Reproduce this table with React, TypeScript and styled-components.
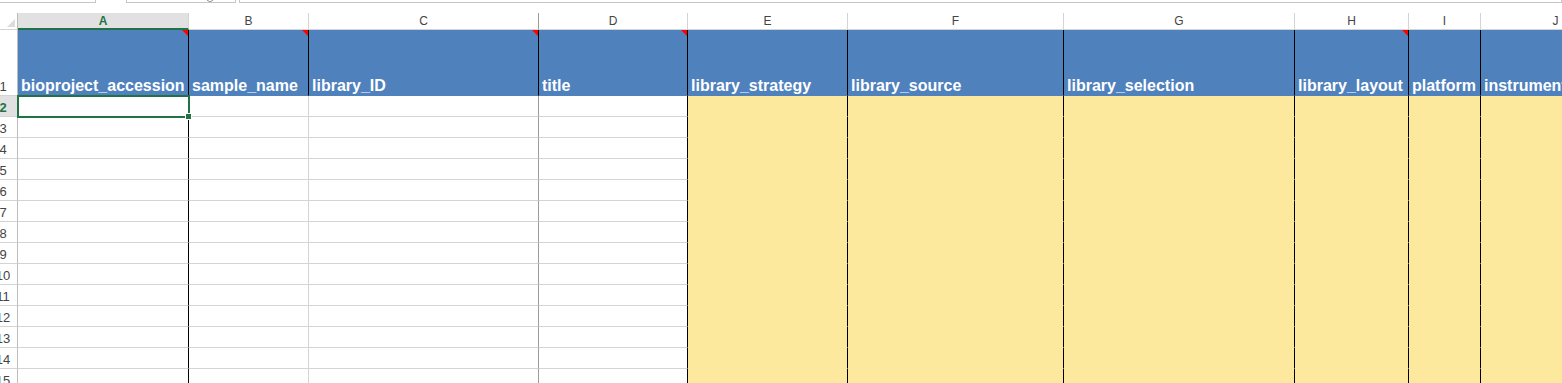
import styled, { createGlobalStyle } from 'styled-components';

const GREEN = '#217346';
const BLUE = '#4f81bd';
const YELLOW = '#fde99d';
const GRID = '#d4d4d4';

type Edge = 'black' | 'light' | 'mid';

const edgeColor: Record<Edge, string> = {
    black: '#000',
    light: GRID,
    mid: '#9b9b9b',
};

type Column = {
    key: string;
    width: number;
    title: string;
    note?: boolean;
    required?: boolean;
    edge: Edge;
};

const columns: Column[] = [
    { key: 'A', width: 171, title: 'bioproject_accession', note: true, edge: 'black' },
    { key: 'B', width: 120, title: 'sample_name', note: true, edge: 'light' },
    { key: 'C', width: 230, title: 'library_ID', note: true, edge: 'mid' },
    { key: 'D', width: 149, title: 'title', note: true, edge: 'black' },
    { key: 'E', width: 160, title: 'library_strategy', required: true, edge: 'black' },
    { key: 'F', width: 216, title: 'library_source', required: true, edge: 'black' },
    { key: 'G', width: 231, title: 'library_selection', required: true, edge: 'black' },
    { key: 'H', width: 114, title: 'library_layout', note: true, required: true, edge: 'black' },
    { key: 'I', width: 72, title: 'platform', required: true, edge: 'black' },
    { key: 'J', width: 150, title: 'instrument_model', required: true, edge: 'black' },
];

const bodyRows = Array.from({ length: 14 }, (_, i) => i + 2);

const GlobalStyle = createGlobalStyle`
  html, body {
    margin: 0;
    background: #fff;
    overflow: hidden;
  }

  body {
    font-family: "Liberation Sans", Arial, sans-serif;
  }
`;

const Page = styled.div`
    display: flex;
    flex-direction: column;
    height: 383px;
    overflow: hidden;
`;

const TabStrip = styled.div`
    display: flex;
    height: 3px;
`;

const Tab = styled.div<{ $width?: number; $gap?: number; $inset?: number }>`
    box-sizing: border-box;
    height: 3px;
    margin-left: ${({ $gap }) => $gap ?? 0}px;
    flex: ${({ $width }) => ($width ? `0 0 ${$width}px` : '1')};
    border: 1px solid #c6c6c6;
    border-top: none;
    border-left-width: ${({ $gap }) => ($gap ? 1 : 0)}px;
    display: flex;
    align-items: flex-end;
    padding-left: ${({ $inset }) => $inset ?? 0}px;
    overflow: hidden;
`;

const Viewport = styled.div`
    margin-top: 10px;
    flex: 1;
    overflow: hidden;
`;

const Sheet = styled.div<{ $cols: string }>`
    display: grid;
    width: max-content;
    margin-left: -11px;
    grid-template-columns: 29px ${({ $cols }) => $cols};
    grid-template-rows: 17px 66px repeat(14, 21px);

    & > div {
        box-sizing: border-box;
        min-width: 0;
    }
`;

const Corner = styled.div`
    position: relative;
    border-right: 1px solid #bcbcbc;
    border-bottom: 1px solid ${GRID};

    &::after {
        content: '';
        position: absolute;
        right: 2px;
        bottom: 2px;
        width: 0;
        height: 0;
        border-left: 8px solid transparent;
        border-bottom: 8px solid #dcdcdc;
    }
`;

const ColHeader = styled.div<{ $active?: boolean; $edge: Edge }>`
    display: flex;
    align-items: center;
    justify-content: center;
    font-size: 12px;
    color: ${({ $active }) => ($active ? GREEN : '#444')};
    font-weight: ${({ $active }) => ($active ? 700 : 400)};
    background: ${({ $active }) => ($active ? '#e1e1e1' : '#fff')};
    border-right: 1px solid ${({ $edge }) => ($edge === 'mid' ? edgeColor.mid : GRID)};
    border-bottom: ${({ $active }) => ($active ? `2px solid ${GREEN}` : `1px solid ${GRID}`)};
`;

const RowHeader = styled.div<{ $active?: boolean }>`
    display: flex;
    align-items: flex-end;
    justify-content: center;
    padding-bottom: 1px;
    font-size: 13px;
    line-height: 15px;
    color: ${({ $active }) => ($active ? GREEN : '#444')};
    font-weight: ${({ $active }) => ($active ? 700 : 400)};
    background: ${({ $active }) => ($active ? '#e1e1e1' : '#fff')};
    border-right: 1px solid #bcbcbc;
    border-bottom: 1px solid ${GRID};
`;

const TitleCell = styled.div`
    position: relative;
    display: flex;
    align-items: flex-end;
    padding: 0 3px;
    background: ${BLUE};
    color: #fff;
    font-weight: 700;
    font-size: 16px;
    line-height: 18px;
    white-space: nowrap;
    border-right: 1px solid #000;
    border-bottom: 1px solid ${BLUE};
`;

const NoteMark = styled.span`
    position: absolute;
    top: 0;
    right: 0;
    width: 0;
    height: 0;
    border-top: 6px solid #f00;
    border-left: 6px solid transparent;
`;

const Cell = styled.div<{ $required?: boolean; $edge: Edge }>`
    position: relative;
    background: ${({ $required }) => ($required ? YELLOW : '#fff')};
    border-right: 1px solid ${({ $edge }) => edgeColor[$edge]};
    border-bottom: 1px solid ${({ $required }) => ($required ? YELLOW : GRID)};
`;

const Selection = styled.div`
    position: absolute;
    top: -1px;
    left: -1px;
    right: -2px;
    bottom: -2px;
    border: 2px solid ${GREEN};
    z-index: 2;
    pointer-events: none;
`;

const FillHandle = styled.span`
    position: absolute;
    right: -4px;
    bottom: -4px;
    width: 5px;
    height: 5px;
    background: ${GREEN};
    border: 1px solid #fff;
`;

export default function App() {
    const cols = columns.map((c) => `${c.width}px`).join(' ');

    return (
        <>
            <GlobalStyle />
            <Page>
                <TabStrip>
                    <Tab $width={96} />
                    <Tab $width={110} $gap={30} $inset={80}>
                        <svg width="6" height="2" viewBox="0 0 6 2">
                            <path d="M0 0 L3 2 L6 0" stroke="#8a8a8a" fill="none" />
                        </svg>
                    </Tab>
                    <Tab $gap={3} />
                </TabStrip>
                <Viewport>
                    <Sheet $cols={cols}>
                        <Corner />
                        {columns.map((c) => (
                            <ColHeader key={c.key} $active={c.key === 'A'} $edge={c.edge}>
                                {c.key}
                            </ColHeader>
                        ))}

                        <RowHeader>1</RowHeader>
                        {columns.map((c) => (
                            <TitleCell key={c.key}>
                                {c.title}
                                {c.note && <NoteMark />}
                            </TitleCell>
                        ))}

                        {bodyRows.map((row) => (
                            <Row key={row} row={row} />
                        ))}
                    </Sheet>
                </Viewport>
            </Page>
        </>
    );
}

function Row({ row }: { row: number }) {
    const active = row === 2;
    return (
        <>
            <RowHeader $active={active}>{row}</RowHeader>
            {columns.map((c) => (
                <Cell key={c.key} $required={c.required} $edge={c.edge}>
                    {active && c.key === 'A' && (
                        <Selection>
                            <FillHandle />
                        </Selection>
                    )}
                </Cell>
            ))}
        </>
    );
}
